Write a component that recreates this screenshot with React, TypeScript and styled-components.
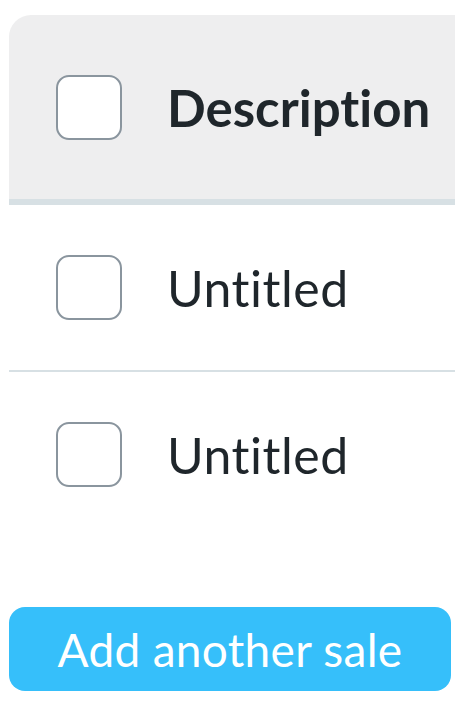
import React from 'react';
import styled, {createGlobalStyle} from 'styled-components';

const GlobalStyle = createGlobalStyle`
    html, body {
        margin: 0;
        padding: 0;
        background: #ffffff;
        overflow: hidden;
    }
    body {
        font-family: Lato, "Open Sans", sans-serif;
        font-variant-ligatures: none;
        color: #1f262b;
    }
`;

const Page = styled.div`
    padding: 15px 4px 0 9px;
    overflow: hidden;
`;

const Table = styled.div`
    margin-right: -40px;
`;

const HeaderRow = styled.div`
    display: flex;
    align-items: center;
    height: 184px;
    padding-left: 47px;
    background: #eeeeef;
    border-top-left-radius: 22px;
    border-bottom: 6px solid #d7e0e4;
`;

const Row = styled.div<{$last?: boolean}>`
    display: flex;
    align-items: center;
    height: 165px;
    padding-left: 47px;
    border-bottom: ${(p) => (p.$last ? 'none' : '2px solid #d7e0e4')};
`;

const Checkbox = styled.span`
    box-sizing: border-box;
    flex: none;
    width: 66px;
    height: 65px;
    border: 2.5px solid #8a959e;
    border-radius: 13px;
    background: #ffffff;
`;

const Cell = styled.span<{$bold?: boolean}>`
    margin-left: 45px;
    font-size: ${(p) => (p.$bold ? '51px' : '50px')};
    font-weight: ${(p) => (p.$bold ? 700 : 400)};
    letter-spacing: ${(p) => (p.$bold ? '0' : '0.5px')};
    white-space: nowrap;
`;

const AddButton = styled.button`
    display: block;
    width: 442px;
    height: 84px;
    margin-top: 70px;
    border: 0;
    border-radius: 16px;
    background: #36bffa;
    color: #ffffff;
    font-family: Lato, "Open Sans", sans-serif;
    font-variant-ligatures: none;
    font-size: 46px;
    letter-spacing: 0.3px;
    padding: 0;
`;

const rows = ['Untitled', 'Untitled'];

export default function App() {
    return (
        <Page>
            <GlobalStyle/>
            <Table>
                <HeaderRow>
                    <Checkbox/>
                    <Cell $bold={true}>{'Description'}</Cell>
                </HeaderRow>
                {rows.map((name, i) => (
                    <Row
                        key={i}
                        $last={i === rows.length - 1}
                    >
                        <Checkbox/>
                        <Cell>{name}</Cell>
                    </Row>
                ))}
            </Table>
            <AddButton type='button'>{'Add another sale'}</AddButton>
        </Page>
    );
}
